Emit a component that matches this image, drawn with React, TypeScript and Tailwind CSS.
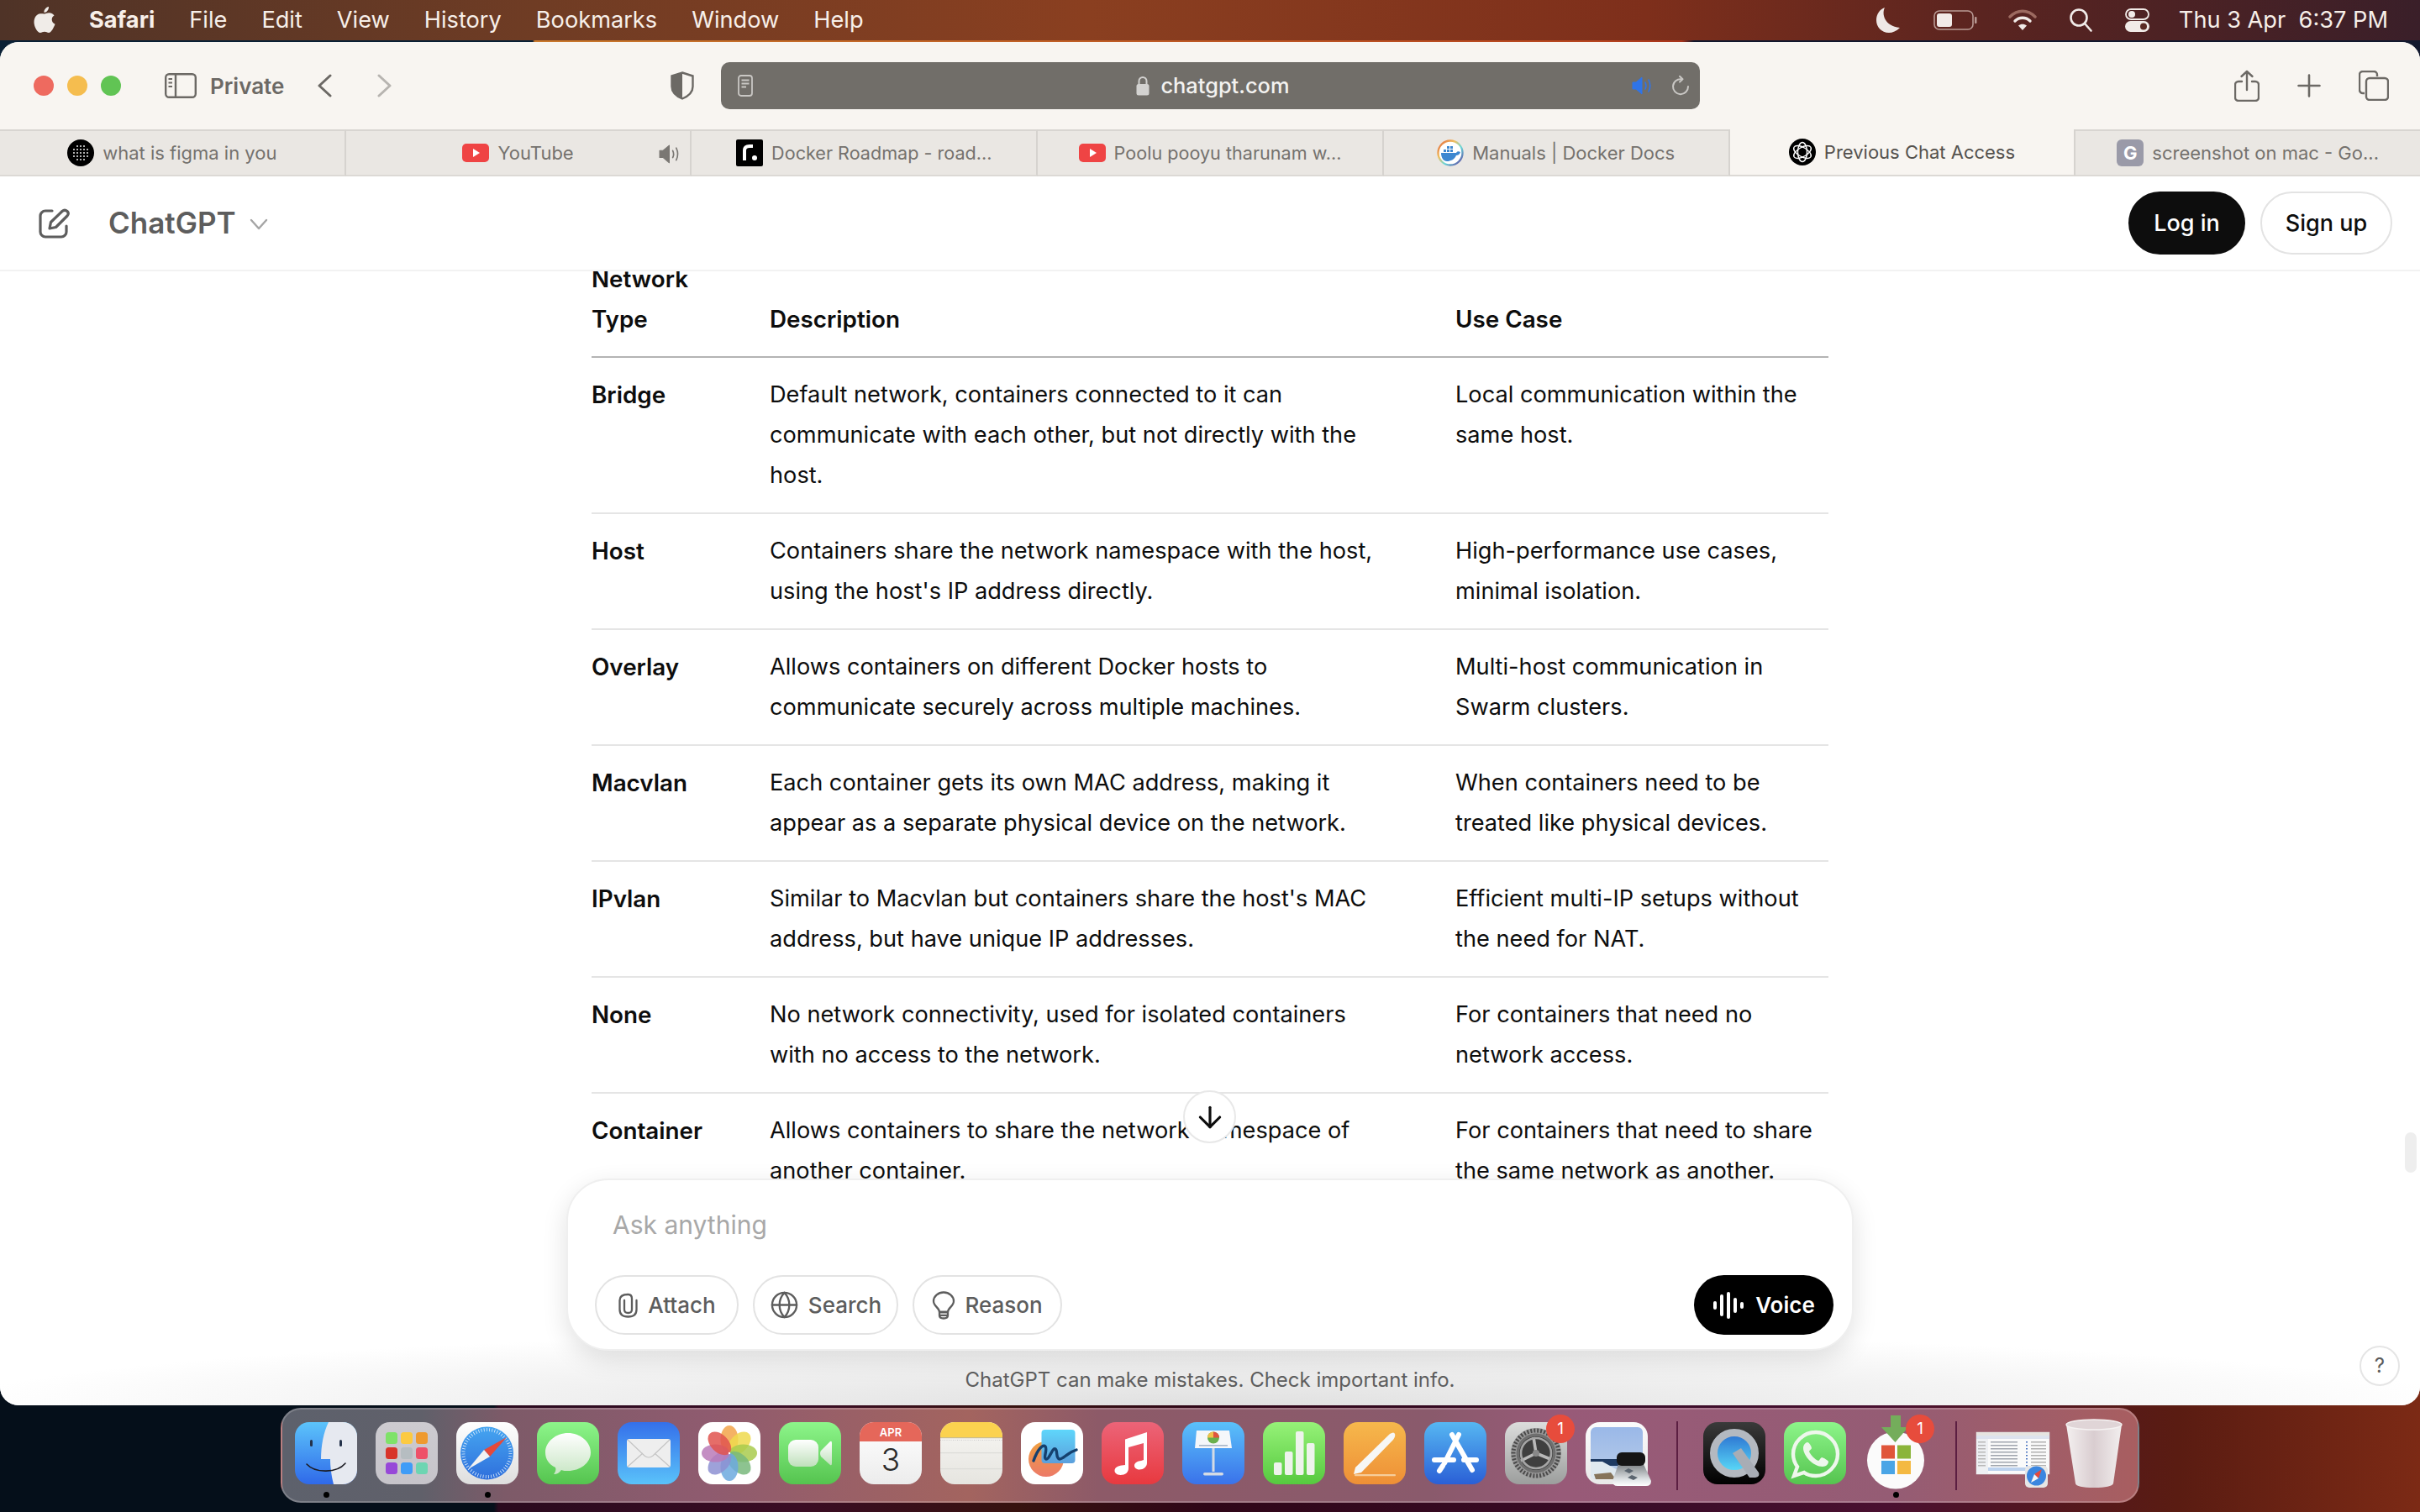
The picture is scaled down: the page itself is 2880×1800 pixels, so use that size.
import React from "react";
import { ArrowDown, Globe } from "lucide-react";

const Sq = ({ id, from, to, children }: { id: string; from: string; to: string; children?: React.ReactNode }) => (
  <svg viewBox="0 0 74 74" className="w-[74px] h-[74px] block overflow-visible">
    <defs>
      <linearGradient id={id} x1="0" y1="0" x2="0" y2="1">
        <stop offset="0" stopColor={from} />
        <stop offset="1" stopColor={to} />
      </linearGradient>
    </defs>
    <rect width="74" height="74" rx="17" fill={`url(#${id})`} />
    {children}
  </svg>
);

const Finder = () => (
  <Sq id="fi" from="#5cc4fb" to="#2f69e9">
    <path d="M40 0H57a17 17 0 0 1 17 17V57a17 17 0 0 1-17 17H46C43 62 42 52 42 44H31C31 28 34 12 40 0Z" fill="#e6e9f0" />
    <rect x="18" y="21" width="3" height="8" rx="1.5" fill="#24324a" />
    <rect x="53" y="21" width="3" height="8" rx="1.5" fill="#24324a" />
    <path d="M14 50C24 61 50 61 60 49" fill="none" stroke="#1c1c24" strokeWidth="1.6" strokeLinecap="round" />
  </Sq>
);

const Launchpad = () => {
  const c = ["#7fe269", "#fcca41", "#ef9a2f", "#d8342a", "#b6bdc1", "#ee5169", "#9748d8", "#3f9cf7", "#6dd5b2"];
  return (
    <Sq id="lp" from="#cdcbd0" to="#c6c4ca">
      {c.map((f, i) => (
        <rect key={i} x={12 + (i % 3) * 18} y={12 + Math.floor(i / 3) * 18} width="14" height="14" rx="3.5" fill={f} />
      ))}
    </Sq>
  );
};

const Safari = () => (
  <Sq id="sa" from="#ffffff" to="#dedede">
    <defs>
      <linearGradient id="sab" x1="0" y1="0" x2="0" y2="1">
        <stop offset="0" stopColor="#45a5f0" />
        <stop offset="1" stopColor="#2f6fdc" />
      </linearGradient>
    </defs>
    <circle cx="36.5" cy="37" r="31.5" fill="url(#sab)" />
    <circle cx="36.5" cy="37" r="28" fill="none" stroke="#dcecfb" strokeWidth="4" strokeDasharray="0.8 2.4" />
    <polygon points="60,18 33,33 40,41" fill="#e5493b" />
    <polygon points="14,56 33,33 40,41" fill="#f2f2f2" />
  </Sq>
);

const Messages = () => (
  <Sq id="ms" from="#8df58a" to="#55c44f">
    <defs>
      <linearGradient id="msb" x1="0" y1="0" x2="0" y2="1">
        <stop offset="0" stopColor="#ffffff" />
        <stop offset="1" stopColor="#c9e6c5" />
      </linearGradient>
    </defs>
    <path d="M37 13C51 13 64 23 64 36S51 58 37 58C34 58 31 58 29 57C27 60 24 62 20 62C22 59 23 57 22 54C14 50 10 44 10 36C10 23 23 13 37 13Z" fill="url(#msb)" />
  </Sq>
);

const Mail = () => (
  <Sq id="ml" from="#3570ea" to="#5ac2fa">
    <rect x="11" y="20" width="52" height="34" rx="3" fill="#eeeeee" />
    <path d="M12 21L32 40Q37 44 42 40L62 21M12 53L30 37M62 53L44 37" fill="none" stroke="#c4c4c4" strokeWidth="1.2" />
  </Sq>
);

const Photos = () => {
  const c = ["#f2a54a", "#eed94d", "#a9cb4e", "#79b97c", "#6ca9de", "#8d90d2", "#ba7ab9", "#e0544f"];
  return (
    <Sq id="ph" from="#ffffff" to="#ffffff">
      {c.map((f, i) => (
        <ellipse key={i} cx="37" cy="20.5" rx="10.5" ry="16.5" fill={f} fillOpacity="0.85" transform={`rotate(${i * 45} 37 37)`} />
      ))}
      <circle cx="37" cy="37" r="1.2" fill="#fff" />
    </Sq>
  );
};

const FaceTime = () => (
  <Sq id="ft" from="#8df58a" to="#55c44f">
    <defs>
      <linearGradient id="ftb" x1="0" y1="0" x2="0" y2="1">
        <stop offset="0" stopColor="#ffffff" />
        <stop offset="1" stopColor="#bfe0bb" />
      </linearGradient>
    </defs>
    <rect x="11" y="21" width="36" height="32" rx="9" fill="url(#ftb)" />
    <path d="M50 34L61 23Q63 22 63 25V49Q63 52 61 51L50 41Q48 37 50 34Z" fill="url(#ftb)" />
  </Sq>
);

const Calendar = () => (
  <div className="relative w-[74px] h-[74px] rounded-[17px] overflow-hidden bg-[linear-gradient(#ffffff,#ececec)] flex flex-col items-center">
    <div className="w-full h-[23px] bg-[#e5675a] text-white text-[13px] font-semibold leading-[24px] text-center [font-family:Inter,sans-serif]">APR</div>
    <div className="text-[#2a2a2a] text-[37px] leading-[44px] font-light [font-family:Inter,sans-serif]">3</div>
  </div>
);

const Notes = () => (
  <Sq id="nt" from="#f7f6f3" to="#e6e5e0">
    <path d="M0 18V17A17 17 0 0 1 17 0H57A17 17 0 0 1 74 17V18Z" fill="#fbd24f" />
    <rect y="18" width="74" height="1.2" fill="#c9bd8e" />
    <line x1="0" y1="21.5" x2="74" y2="21.5" stroke="#c5c5c5" strokeWidth="0.8" strokeDasharray="1 1.5" />
    <rect y="36" width="74" height="1.2" fill="#dcdcd8" />
    <rect y="55" width="74" height="1.2" fill="#dcdcd8" />
  </Sq>
);

const Freeform = () => (
  <Sq id="ff" from="#ffffff" to="#ffffff">
    <defs>
      <linearGradient id="ffb" x1="0" y1="0" x2="0" y2="1">
        <stop offset="0" stopColor="#5fd6fb" />
        <stop offset="1" stopColor="#5b9fdc" />
      </linearGradient>
      <linearGradient id="ffo" x1="0" y1="0" x2="0" y2="1">
        <stop offset="0" stopColor="#f0a040" />
        <stop offset="1" stopColor="#ec7a68" />
      </linearGradient>
    </defs>
    <circle cx="30" cy="44" r="21" fill="url(#ffo)" />
    <rect x="24.5" y="9" width="40" height="40" rx="4" fill="url(#ffb)" />
    <path d="M15 46C20 32 26 26 29 29C32 32 26 43 30 44C34 45 37 30 41 32C44 34 41 43 46 44C51 44 54 37 66 33" fill="none" stroke="#15406e" strokeWidth="3.4" strokeLinecap="round" />
  </Sq>
);

const Music = () => (
  <Sq id="mu" from="#ec6478" to="#e8393f">
    <path d="M27 20.5L53 12V48.5C53 53 49 56.5 44 56.5C40 56.5 38 54 38 52C38 48 42 46.5 46 46L49 45V25L31 30V55C31 60 27 63 21.5 63C17 63 14.5 60 14.5 58C14.5 54 18.5 52 23 51.5L27 51Z" fill="#fff" transform="translate(1 0)" />
  </Sq>
);

const Keynote = () => (
  <Sq id="kn" from="#5ac1fa" to="#3a72ea">
    <path d="M17 10H56L59 31H15Z" fill="#f5f7fa" />
    <rect x="20" y="27" width="34" height="1.6" fill="#a8b6c8" />
    <circle cx="37" cy="18.5" r="7" fill="#6ab04c" />
    <path d="M37 18.5V11.5A7 7 0 0 1 44 18.5Z" fill="#e0553f" />
    <path d="M37 18.5L30 18.5A7 7 0 0 1 37 11.5Z" fill="#f2c14a" />
    <rect x="35.5" y="31" width="3" height="28" fill="#d5dbe4" />
    <rect x="25" y="60" width="24" height="3.5" rx="1.7" fill="#d5dbe4" />
  </Sq>
);

const Numbers = () => (
  <Sq id="nu" from="#96f278" to="#56c93f">
    <rect x="13" y="48" width="9.5" height="15" rx="2" fill="#eef3ec" />
    <rect x="26" y="35" width="9.5" height="28" rx="2" fill="#eef3ec" />
    <rect x="39" y="11" width="9.5" height="52" rx="2" fill="#eef3ec" />
    <rect x="52" y="25" width="9.5" height="38" rx="2" fill="#eef3ec" />
  </Sq>
);

const Pages = () => (
  <Sq id="pg" from="#f6b84c" to="#ee8f36">
    <path d="M12 62L14 54L55 14Q60 11 61 14Q62 17 59 21L21 60Z" fill="#f7f7f5" />
    <rect x="13" y="62" width="49" height="2.2" rx="1" fill="#f6cd9a" />
  </Sq>
);

const AppStore = () => (
  <Sq id="as" from="#56b7f2" to="#2a5fd6">
    <path d="M41 15L24 49M33 15L57 57M12 45H35M47 45H62M22 52L18 58" fill="none" stroke="#fff" strokeWidth="6" strokeLinecap="round" />
  </Sq>
);

const SettingsIcon = () => (
  <Sq id="st" from="#dcdddc" to="#9c9e9d">
    <circle cx="37" cy="37" r="30" fill="#9a9a9a" />
    <circle cx="37" cy="37" r="27" fill="none" stroke="#4a4a4a" strokeWidth="5" strokeDasharray="2 2" />
    <circle cx="37" cy="37" r="23.5" fill="#6f6f6f" />
    <circle cx="37" cy="37" r="20" fill="#3f3f3f" />
    <path d="M37 37L34 18M37 37L54 44M37 37L19 46" stroke="#b9b9b9" strokeWidth="3.6" />
    <circle cx="37" cy="37" r="18" fill="none" stroke="#a5a5a5" strokeWidth="2.6" />
    <circle cx="37" cy="37" r="4" fill="#888" />
  </Sq>
);

const Preview = () => (
  <Sq id="pv" from="#fbfbfb" to="#e9e9e9">
    <defs>
      <linearGradient id="pvs" x1="0" y1="0" x2="0" y2="1">
        <stop offset="0" stopColor="#9ab8e8" />
        <stop offset="1" stopColor="#b9cde8" />
      </linearGradient>
      <linearGradient id="pvg" x1="0" y1="0" x2="0" y2="1">
        <stop offset="0" stopColor="#7c8184" />
        <stop offset="0.7" stopColor="#dfe3e5" />
        <stop offset="1" stopColor="#ffffff" />
      </linearGradient>
    </defs>
    <path d="M6 12A6 6 0 0 1 12 6H62A6 6 0 0 1 68 12V68H12A6 6 0 0 1 6 62Z" fill="url(#pvs)" />
    <path d="M6 44H68V52H6Z" fill="#1f3b62" />
    <path d="M6 47H20L40 58V68H12A6 6 0 0 1 6 62Z" fill="#dfe9ef" />
    <path d="M10 62L30 60L36 68H12Z" fill="#86745a" />
    <path d="M39 50H69L78 70Q78 76 72 76H38Q32 76 32 70Z" fill="url(#pvg)" />
    <rect x="37" y="36" width="34" height="16" rx="6" fill="#151515" />
    <path d="M46 58l5-3 6 3-5 3zM50 66l5-3 7 3-5 3z" fill="#5c6670" />
  </Sq>
);

const QuickTime = () => (
  <Sq id="qt" from="#3a3a3a" to="#000000">
    <defs>
      <linearGradient id="qtb" x1="0" y1="0" x2="0" y2="1">
        <stop offset="0" stopColor="#2a6fd0" />
        <stop offset="1" stopColor="#5de0fa" />
      </linearGradient>
    </defs>
    <circle cx="37" cy="37" r="24.5" fill="url(#qtb)" stroke="#b4b9c0" strokeWidth="9" />
    <path d="M35 37L45 31L66 60Q68 65 62 66L55 66Z" fill="#a8adb5" />
  </Sq>
);

const WhatsApp = () => (
  <Sq id="wa" from="#8df58a" to="#55c44f">
    <path d="M38 12C23 12 11 24 11 38C11 44 13 49 16 53L12 64L24 60C28 63 33 64 38 64C52 64 64 52 64 38C64 24 52 12 38 12Z" fill="none" stroke="#eef7ec" strokeWidth="4.4" />
    <path d="M28 24C26 24 23 27 23 31C23 40 35 53 46 53C50 53 53 50 53 47C53 46 47 42 45 42C44 42 42 46 41 46C37 45 31 38 30 35C30 34 33 32 33 31C33 29 30 24 28 24Z" fill="#eef7ec" />
  </Sq>
);

const Store = () => (
  <svg viewBox="0 0 74 74" className="w-[74px] h-[74px] block overflow-visible">
    <circle cx="37" cy="45.5" r="34" fill="#fbfbfb" />
    <rect x="20" y="27.5" width="16" height="16" fill="#e0563a" />
    <rect x="39" y="27.5" width="16" height="16" fill="#8bb53a" />
    <rect x="20" y="46" width="16" height="16" fill="#4aa5e6" />
    <rect x="39" y="46" width="16" height="16" fill="#f4b942" />
    <path d="M31 -8H43V6H52L36.5 24L20 6H31Z" fill="#74ad5b" />
  </svg>
);

const Thumb = () => (
  <svg viewBox="0 0 74 74" className="w-[74px] h-[74px] block overflow-visible">
    <rect x="-7" y="12" width="87" height="50" fill="#fafafa" stroke="#d5d5d5" strokeWidth="0.5" />
    <rect x="-7" y="12" width="87" height="4" fill="#e6e4e0" />
    <rect x="-7" y="16" width="87" height="4" fill="#dde3ee" />
    <rect x="-7" y="20" width="14" height="42" fill="#eef0f3" />
    {[23, 27, 31, 35, 39, 43, 47, 51].map((y) => (
      <g key={y}>
        <rect x="10" y={y} width="32" height="1.5" fill="#a0a5ae" />
        <rect x="52" y={y} width="2" height="1.5" fill="#4a74c0" />
        <rect x="58" y={y} width="18" height="1.5" fill="#b0b0b0" />
        <rect x="-5" y={y} width="9" height="1.5" fill="#b8b8b8" />
      </g>
    ))}
    <rect x="7" y="54" width="60" height="4" fill="#bcd2ee" />
    <rect x="51" y="52" width="27" height="26" rx="5" fill="#e6e6e6" />
    <circle cx="64.5" cy="64" r="11.5" fill="#3a86e0" />
    <polygon points="71,56 62,62 67,67" fill="#e5493b" />
    <polygon points="58,72 62,62 67,67" fill="#f4f4f4" />
  </svg>
);

const Trash = () => (
  <svg viewBox="0 0 74 74" className="w-[74px] h-[74px] block overflow-visible">
    <defs>
      <linearGradient id="trb" x1="0" y1="0" x2="1" y2="0">
        <stop offset="0" stopColor="#f4f0f0" />
        <stop offset="0.5" stopColor="#d9cdd0" />
        <stop offset="1" stopColor="#f2eeee" />
      </linearGradient>
    </defs>
    <path d="M4 3L15 73Q16 78 37 78Q58 78 60 73L70 3Z" fill="url(#trb)" />
    <ellipse cx="37" cy="3" rx="33" ry="6" fill="#e0d5d7" stroke="#f6f3f3" strokeWidth="1.5" />
  </svg>
);

const Badge = () => (
  <div className="absolute right-[-9px] top-[-9px] w-[34px] h-[34px] rounded-full bg-[#e74c3c] text-white text-[19px] leading-[34px] text-center [font-family:Inter,sans-serif]">1</div>
);

const Dot = () => <div className="absolute left-[34px] top-[83px] w-[7px] h-[7px] rounded-full bg-black" />;

const DockItem = ({ children, dot, badge }: { children: React.ReactNode; dot?: boolean; badge?: boolean }) => (
  <div className="relative w-[74px] h-[74px] shrink-0">
    {children}
    {badge && <Badge />}
    {dot && <Dot />}
  </div>
);

const Div = () => <div className="w-[2px] h-[82px] -mt-[1px] ml-[12px] mr-[8px] bg-[#5c1f42] shrink-0" />;

/* ---------- browser glyphs ---------- */
const Sidebar = () => (
  <svg width="38" height="30" viewBox="0 0 38 30" fill="none" stroke="#6c6965" strokeWidth="2.4">
    <rect x="1.2" y="1.2" width="35.6" height="27.6" rx="4" />
    <line x1="13" y1="1.2" x2="13" y2="28.8" />
    <path d="M4.5 7H9M4.5 11.5H9M4.5 16H9" strokeWidth="2" />
  </svg>
);
const Chevron = ({ dir, color }: { dir: "l" | "r"; color: string }) => (
  <svg width="18" height="28" viewBox="0 0 18 28" fill="none" stroke={color} strokeWidth="3" strokeLinecap="round" strokeLinejoin="round">
    <path d={dir === "l" ? "M16 2L3 14L16 26" : "M2 2L15 14L2 26"} />
  </svg>
);
const Shield = () => (
  <svg width="28" height="34" viewBox="0 0 28 34" className="block">
    <path d="M14 1.5L26.5 5.5V18C26.5 25 20 30 14 32.5C8 30 1.5 25 1.5 18V5.5Z" fill="none" stroke="#6c6965" strokeWidth="2.4" />
    <path d="M14 1.5L1.5 5.5V18C1.5 25 8 30 14 32.5Z" fill="#6c6965" />
  </svg>
);
const PageIcon = () => (
  <svg width="18" height="26" viewBox="0 0 18 26" fill="none" stroke="#c9c7c4" strokeWidth="1.8">
    <rect x="1" y="1" width="16" height="24" rx="3" />
    <path d="M4.5 6.5H13.5M4.5 10.5H13.5M4.5 14.5H10" />
  </svg>
);
const Lock = () => (
  <svg width="16" height="24" viewBox="0 0 16 24" className="block">
    <path d="M3.5 11V6.5a4.5 4.5 0 0 1 9 0V11" fill="none" stroke="#d3d2d0" strokeWidth="2" />
    <rect x="0.5" y="10" width="15" height="13.5" rx="2.5" fill="#d3d2d0" />
  </svg>
);
const Speaker = ({ color, w = 26 }: { color: string; w?: number }) => (
  <svg width={w} height={(w * 22) / 26} viewBox="0 0 26 22" fill="none" className="block">
    <path d="M1 7H5L12 1V21L5 15H1Z" fill={color} stroke={color} strokeWidth="1" strokeLinejoin="round" />
    <path d="M16 7Q18 11 16 15M20 4Q23.5 11 20 18" stroke={color} strokeWidth="1.6" strokeLinecap="round" />
  </svg>
);
const Reload = () => (
  <svg width="22" height="24" viewBox="0 0 22 24" fill="none" stroke="#c9c7c4" strokeWidth="2" strokeLinecap="round" strokeLinejoin="round">
    <path d="M12 4.2A9 9 0 1 0 20 13" />
    <path d="M10 0.8L13.5 4.2L10 7.6" />
  </svg>
);
const ShareIcon = () => (
  <svg width="30" height="38" viewBox="0 0 30 38" fill="none" stroke="#6c6965" strokeWidth="2.4" strokeLinecap="round" strokeLinejoin="round">
    <path d="M9 14H5a4 4 0 0 0-4 4V33a4 4 0 0 0 4 4H25a4 4 0 0 0 4-4V18a4 4 0 0 0-4-4H21" />
    <path d="M15 24V2M8.5 8L15 2L21.5 8" />
  </svg>
);
const PlusIcon = () => (
  <svg width="28" height="28" viewBox="0 0 28 28" stroke="#6c6965" strokeWidth="2.6" strokeLinecap="round">
    <path d="M14 1.5V26.5M1.5 14H26.5" />
  </svg>
);
const TabsIcon = () => (
  <svg width="36" height="36" viewBox="0 0 36 36" fill="none" stroke="#6c6965" strokeWidth="2.4">
    <path d="M7 27H5a4 4 0 0 1-4-4V5a4 4 0 0 1 4-4H18a4 4 0 0 1 4 4V7" />
    <rect x="9" y="9" width="26" height="26" rx="4" />
  </svg>
);

/* ---------- favicons ---------- */
const FigmaFav = () => (
  <svg width="32" height="32" viewBox="0 0 32 32">
    <circle cx="16" cy="16" r="16" fill="#000" />
    {[-8, -4, 0, 4, 8].flatMap((x) =>
      [-8, -4, 0, 4, 8].map((y) =>
        x * x + y * y < 90 ? <circle key={`${x}${y}`} cx={16 + x} cy={16 + y} r="1.1" fill="#ddd" /> : null
      )
    )}
  </svg>
);
const YtFav = () => (
  <svg width="32" height="24" viewBox="0 0 32 24">
    <rect width="32" height="22" y="1" rx="5" fill="#ef4444" />
    <polygon points="13,7 21,12 13,17" fill="#fff" />
  </svg>
);
const RoadmapFav = () => (
  <svg width="32" height="32" viewBox="0 0 32 32">
    <rect width="32" height="32" rx="2" fill="#000" />
    <path d="M10 25V13Q10 8 16 8H20" fill="none" stroke="#fff" strokeWidth="4" />
    <circle cx="22" cy="22" r="3" fill="#fff" />
  </svg>
);
const DockerFav = () => (
  <svg width="32" height="32" viewBox="0 0 32 32">
    <defs>
      <linearGradient id="dkr" x1="0" y1="0" x2="1" y2="1">
        <stop offset="0" stopColor="#e2603a" />
        <stop offset="0.35" stopColor="#f0c060" />
        <stop offset="0.6" stopColor="#6cd8d8" />
        <stop offset="1" stopColor="#5a3aa0" />
      </linearGradient>
    </defs>
    <circle cx="16" cy="16" r="14.5" fill="#fff" stroke="url(#dkr)" strokeWidth="2.4" />
    <path d="M5 16H23C24 14 26 14 28 15C27 18 25 19 23 19C21 24 16 26 12 26C8 26 5 22 5 16Z" fill="#3d87d0" />
    <path d="M8 12h3v3H8zM12 12h3v3h-3zM16 12h3v3h-3zM12 8h3v3h-3zM16 8h3v3h-3z" fill="#3d87d0" />
  </svg>
);
const GptFav = () => (
  <svg width="32" height="32" viewBox="0 0 32 32">
    <circle cx="16" cy="16" r="16" fill="#000" />
    {[0, 60, 120].map((a) => (
      <ellipse key={a} cx="16" cy="16" rx="11.5" ry="5.5" fill="none" stroke="#fff" strokeWidth="1.4" transform={`rotate(${a + 30} 16 16)`} />
    ))}
  </svg>
);
const GoogleFav = () => (
  <div className="w-[32px] h-[32px] rounded-[6px] bg-[#9a9aa8] text-white text-[22px] font-bold leading-[32px] text-center">G</div>
);

const Tab = ({ icon, label, active, extra, last, cls = "text-[22px]" }: { icon: React.ReactNode; label: string; active?: boolean; extra?: React.ReactNode; last?: boolean; cls?: string }) => (
  <div
    className={`relative flex-1 flex items-center justify-center gap-[10px] h-full ${active ? "bg-[#f8f5f1] border-t-0" : "bg-[#eae7e3] border-t-2 border-t-[#d8d5d1]"} ${last ? "" : "border-r-2 border-r-[#d6d3cf]"} border-b-2 border-b-[#dcd9d5] ${cls} ${active ? "text-[#55524e]" : "text-[#75726e]"}`}
  >
    {icon}
    <span>{label}</span>
    {extra && <div className="absolute right-[10px] top-[16px]">{extra}</div>}
  </div>
);

/* ---------- chatgpt ---------- */
const Compose = () => (
  <svg width="38" height="36" viewBox="0 0 38 36" fill="none" stroke="#5d5d5d" strokeWidth="3.2" strokeLinecap="round" strokeLinejoin="round">
    <path d="M16 3H8A6 6 0 0 0 2 9V28A6 6 0 0 0 8 34H27A6 6 0 0 0 33 28V21" />
    <path d="M13 24L14.5 16.5L28 3.5Q31 1 34 3.5Q36.5 6 34 9L20.5 22.5Z" />
  </svg>
);
const Clip = () => (
  <svg width="25" height="30" viewBox="0 0 25 30" fill="none" stroke="#5d5d5d" strokeWidth="2.3" strokeLinecap="round">
    <path d="M8 9V20Q8 24 12.5 24Q17 24 17 20V7Q17 2 12.5 2Q2.5 2 2.5 9V20Q2.5 28.5 12.5 28.5Q22.5 28.5 22.5 20V9" />
  </svg>
);
const Bulb = () => (
  <svg width="28" height="34" viewBox="0 0 28 34" fill="none" stroke="#5d5d5d" strokeWidth="2.3" strokeLinecap="round" strokeLinejoin="round">
    <path d="M9 25C9 20 2 18 2 12A12 10.5 0 0 1 26 12C26 18 19 20 19 25Z" />
    <path d="M9 25H19V29Q19 32.5 14 32.5Q9 32.5 9 29ZM9 28.8H19" />
  </svg>
);
const VoiceBars = () => (
  <svg width="38" height="32" viewBox="0 0 38 32" fill="#fff">
    <rect x="1" y="11" width="4" height="10" rx="2" />
    <rect x="9" y="3" width="4" height="26" rx="2" />
    <rect x="17" y="0" width="4" height="32" rx="2" />
    <rect x="25" y="7" width="4" height="18" rx="2" />
    <rect x="33" y="12" width="4" height="8" rx="2" />
  </svg>
);

const Pill = ({ icon, label, cls }: { icon: React.ReactNode; label: string; cls: string }) => (
  <div className={`h-[71px] rounded-full border-2 border-[#e3e3e3] flex items-center justify-center gap-[11px] text-[26px] font-medium text-[#5d5d5d] ${cls}`}>
    {icon}
    <span>{label}</span>
  </div>
);

const rows: [string, string[], string[]][] = [
  ["Bridge", ["Default network, containers connected to it can", "communicate with each other, but not directly with the", "host."], ["Local communication within the", "same host."]],
  ["Host", ["Containers share the network namespace with the host,", "using the host's IP address directly."], ["High-performance use cases,", "minimal isolation."]],
  ["Overlay", ["Allows containers on different Docker hosts to", "communicate securely across multiple machines."], ["Multi-host communication in", "Swarm clusters."]],
  ["Macvlan", ["Each container gets its own MAC address, making it", "appear as a separate physical device on the network."], ["When containers need to be", "treated like physical devices."]],
  ["IPvlan", ["Similar to Macvlan but containers share the host's MAC", "address, but have unique IP addresses."], ["Efficient multi-IP setups without", "the need for NAT."]],
  ["None", ["No network connectivity, used for isolated containers", "with no access to the network."], ["For containers that need no", "network access."]],
  ["Container", ["Allows containers to share the network namespace of", "another container."], ["For containers that need to share", "the same network as another."]],
];

const Lines = ({ l }: { l: string[] }) => (
  <>
    {l.map((t) => (
      <div key={t} className="whitespace-nowrap">{t}</div>
    ))}
  </>
);

export default function App() {
  return (
    <div className="relative w-[2880px] h-[1800px] overflow-hidden flex flex-col [font-family:Inter,'Liberation_Sans',sans-serif] [background:linear-gradient(90deg,#0a2035_0%,#0a2035_22%,#c9782c_22.1%,#b8451f_66%,#a8321a_69.5%,#12182e_70%,#12182e_100%)_top/100%_80px_no-repeat,linear-gradient(90deg,#050f1a_0%,#050f1a_20.4%,#2a0a1e_20.6%,#3a0c24_33%,#37120f_42%,#2f0618_50%,#3a0c28_68%,#4a1030_78%,#5a1c12_90%,#7c2a15_100%)]">
      {/* menu bar */}
      <div className="h-[48px] shrink-0 flex items-center pl-[40px] pr-[38px] text-[27.2px] text-[#f7efe9] bg-[linear-gradient(90deg,#4f3327_0%,#6f3c24_22%,#8a3f20_45%,#7e2f1b_68%,#5a2420_82%,#3a1f29_100%)]">
        <svg width="26" height="32" viewBox="0 0 26 32" fill="#f0ece8" className="mr-[40px]">
          <path d="M18 0C18.3 3.5 15.5 7 12.5 7C12 3.5 15 0.5 18 0ZM12.8 8.5C14.5 8.5 16 7.3 18.5 7.3C20.5 7.3 23 8.3 24.5 10.6C20.3 13 21 19 25.5 20.8C24 25 21 31 18 31C16 31 15.3 29.8 13 29.8C10.7 29.8 9.8 31 8 31C4.5 31 0.5 24 0.5 18.5C0.5 12.5 4.3 8.3 8 8.3C10 8.3 11.5 8.5 12.8 8.5Z" />
        </svg>
        <span className="font-bold mr-[41px]">Safari</span>
        <span className="mr-[41px]">File</span>
        <span className="mr-[41px]">Edit</span>
        <span className="mr-[41px]">View</span>
        <span className="mr-[41px]">History</span>
        <span className="mr-[41px]">Bookmarks</span>
        <span className="mr-[41px]">Window</span>
        <span>Help</span>
        <div className="flex-1" />
        <svg width="29" height="30" viewBox="0 0 29 30" fill="#efe8e6" className="mr-[39px]">
          <path d="M10 0C6 8 10 22 28 24C24 28 19 30 15 30C6 30 0 23 0 15C0 8 4 2 10 0Z" />
        </svg>
        <svg width="52" height="24" viewBox="0 0 52 24" fill="none" className="mr-[37px]">
          <rect x="1" y="1" width="46" height="22" rx="6" stroke="#b89a94" strokeWidth="1.6" />
          <rect x="4" y="4" width="18" height="16" rx="3" fill="#f1ebe8" />
          <rect x="49" y="8" width="2.5" height="8" rx="1" fill="#b89a94" />
        </svg>
        <svg width="34" height="26" viewBox="0 0 34 26" fill="none" className="mr-[39px]" strokeLinecap="round">
          <path d="M2 9C11 0 23 0 32 9" stroke="#9c6a60" strokeWidth="3.4" />
          <path d="M8 14C13 9 21 9 26 14" stroke="#f1ebe8" strokeWidth="3.4" />
          <path d="M17 25L12 19.5C15 17 19 17 22 19.5Z" fill="#f1ebe8" />
        </svg>
        <svg width="27" height="28" viewBox="0 0 27 28" fill="none" stroke="#f1ebe8" strokeWidth="2.6" className="mr-[39px]" strokeLinecap="round">
          <circle cx="11" cy="11" r="9.5" />
          <path d="M18 18L25.5 26.5" />
        </svg>
        <svg width="29" height="28" viewBox="0 0 29 28" className="mr-[35px]">
          <rect x="1" y="1" width="27" height="12" rx="6" fill="none" stroke="#f1ebe8" strokeWidth="1.8" />
          <circle cx="8" cy="7" r="4" fill="#f1ebe8" />
          <rect y="15" width="29" height="13" rx="6.5" fill="#f1ebe8" />
          <circle cx="22" cy="21.5" r="4" fill="#5a2a24" />
        </svg>
        <span className="whitespace-pre">Thu 3 Apr  6:37 PM</span>
      </div>
      <div className="h-[2px] shrink-0" />

      {/* window */}
      <div className="relative flex-1 min-h-0 flex flex-col rounded-[22px] overflow-hidden bg-white">
        {/* toolbar */}
        <div className="h-[104px] shrink-0 bg-[#f8f5f1] flex items-center pl-[40px] pr-[37px]">
          <div className="w-[24px] h-[24px] rounded-full bg-[#ee6a5f]" />
          <div className="w-[24px] h-[24px] rounded-full bg-[#f5bd4f] ml-[16px]" />
          <div className="w-[24px] h-[24px] rounded-full bg-[#61c454] ml-[16px]" />
          <div className="ml-[52px]"><Sidebar /></div>
          <span className="ml-[16px] text-[26px] font-semibold text-[#6c6965]">Private</span>
          <div className="ml-[39px]"><Chevron dir="l" color="#6c6965" /></div>
          <div className="ml-[54px]"><Chevron dir="r" color="#b7b4b0" /></div>
          <div className="ml-[331px]"><Shield /></div>
          <div className="ml-[32px] w-[1165px] h-[56px] rounded-[10px] bg-[#716e69] flex items-center pl-[20px] pr-[12px]">
            <PageIcon />
            <div className="flex-1 flex items-center justify-center gap-[13px] pl-[48px] text-[25.4px] font-medium text-[#f3f2f0]">
              <Lock />
              <span>chatgpt.com</span>
            </div>
            <Speaker color="#2f74e8" />
            <div className="ml-[21px]"><Reload /></div>
          </div>
          <div className="flex-1" />
          <ShareIcon />
          <div className="ml-[45px]"><PlusIcon /></div>
          <div className="ml-[45px]"><TabsIcon /></div>
        </div>

        {/* tabs */}
        <div className="h-[56px] shrink-0 flex">
          <Tab icon={<FigmaFav />} label="what is figma in you" />
          <Tab icon={<YtFav />} label="YouTube" extra={<Speaker color="#7a7773" w={27} />} />
          <Tab icon={<RoadmapFav />} label="Docker Roadmap - road..." cls="text-[21.6px]" />
          <Tab icon={<YtFav />} label="Poolu pooyu tharunam w..." cls="text-[21.6px]" />
          <Tab icon={<DockerFav />} label="Manuals | Docker Docs" />
          <Tab icon={<GptFav />} label="Previous Chat Access" active />
          <Tab icon={<GoogleFav />} label="screenshot on mac - Go..." last />
        </div>

        {/* chatgpt header */}
        <div className="h-[113px] shrink-0 flex items-center pl-[46px] pr-[33px] border-b-2 border-[#f2f2f2] bg-white">
          <Compose />
          <span className="ml-[45px] text-[35px] font-semibold text-[#5d5d5d]">ChatGPT</span>
          <svg width="22" height="14" viewBox="0 0 22 14" fill="none" stroke="#a5a5a5" strokeWidth="2.4" strokeLinecap="round" strokeLinejoin="round" className="ml-[16px] mt-[2px]">
            <path d="M2 2L11 12L20 2" />
          </svg>
          <div className="flex-1" />
          <div className="w-[139px] h-[75px] pt-[2px] rounded-full bg-[#0d0d0d] text-white text-[27px] font-medium flex items-center justify-center">Log in</div>
          <div className="ml-[18px] w-[157px] h-[75px] pt-[2px] rounded-full border-2 border-[#e3e3e3] text-[#0d0d0d] text-[27px] font-medium flex items-center justify-center">Sign up</div>
        </div>

        {/* conversation */}
        <div className="relative flex-1 min-h-0 overflow-hidden bg-white">
          <table className="-mt-[15px] ml-[704px] w-[1472px] table-fixed border-collapse text-[27.2px] leading-[48px] text-[#0d0d0d]">
            <thead>
              <tr className="border-b-2 border-[#b4b4b4] text-[27.8px] leading-[48px]">
                <th className="w-[212px] pb-[20px] text-left font-semibold align-bottom">Network<br />Type</th>
                <th className="w-[816px] pb-[20px] text-left font-semibold align-bottom">Description</th>
                <th className="pb-[20px] text-left font-semibold align-bottom">Use Case</th>
              </tr>
            </thead>
            <tbody>
              {rows.map(([a, b, c]) => (
                <tr key={a} className="border-b-2 border-[#e5e5e5]">
                  <td className="py-[20px] align-top font-semibold text-[27.8px]">{a}</td>
                  <td className="py-[20px] align-top"><Lines l={b} /></td>
                  <td className="py-[20px] align-top"><Lines l={c} /></td>
                </tr>
              ))}
            </tbody>
          </table>
          <div className="absolute left-[1408px] top-[975px] w-[63px] h-[63px] rounded-full bg-white border-2 border-[#e8e8e8] flex items-center justify-center text-[#0d0d0d]">
            <ArrowDown size={40} strokeWidth={1.9} />
          </div>
        </div>

        {/* composer */}
        <div className="relative h-[270px] shrink-0 bg-[radial-gradient(ellipse_1500px_90px_at_50%_100%,#e0e0e0,#ffffff)]">
          <div className="ml-[674px] w-[1532px] h-[205px] rounded-[50px] bg-white border-2 border-[#efefef] shadow-[0_10px_30px_rgba(0,0,0,0.12)] flex flex-col pl-[32px] pr-[22px]">
            <div className="h-[113px] pl-[21px] pb-[6px] flex items-center text-[30px] text-[#a8a8a8]">Ask anything</div>
            <div className="flex items-center gap-[17px]">
              <Pill cls="w-[171px]" icon={<Clip />} label="Attach" />
              <Pill cls="w-[173px]" icon={<Globe size={35} strokeWidth={1.6} />} label="Search" />
              <Pill cls="w-[178px]" icon={<Bulb />} label="Reason" />
              <div className="flex-1" />
              <div className="w-[166px] h-[71px] rounded-full bg-black text-white text-[26px] font-semibold flex items-center justify-center gap-[13px]">
                <VoiceBars />
                <span>Voice</span>
              </div>
            </div>
          </div>
          <div className="h-[65px] pt-[5px] flex items-center justify-center text-[24px] text-[#5d5d5d]">ChatGPT can make mistakes. Check important info.</div>
        </div>

        {/* scroll thumb + help */}
        <div className="absolute right-[4px] top-[1298px] w-[14px] h-[48px] rounded-full bg-[#eeeeee]" />
        <div className="absolute right-[24px] bottom-[23px] w-[48px] h-[48px] rounded-full border-2 border-[#e5e5e5] bg-white flex items-center justify-center text-[#5d5d5d] text-[24px]">?</div>
      </div>

      {/* dock */}
      <div className="h-[127px] shrink-0 pt-[3px] flex justify-center">
        <div className="h-[113px] flex items-start gap-[22px] pt-[15px] pl-[15px] pr-[15px] rounded-[24px] border-2 border-[#ffffff33] bg-[linear-gradient(90deg,#5d616c_0%,#60606a_7.5%,#7d5a68_12%,#8f5b6f_23%,#a3645f_37%,#8d5a68_44%,#8a5a6c_62%,#985a78_69%,#955c74_87%,#a85e60_100%)]">
          <DockItem dot><Finder /></DockItem>
          <DockItem><Launchpad /></DockItem>
          <DockItem dot><Safari /></DockItem>
          <DockItem><Messages /></DockItem>
          <DockItem><Mail /></DockItem>
          <DockItem><Photos /></DockItem>
          <DockItem><FaceTime /></DockItem>
          <DockItem><Calendar /></DockItem>
          <DockItem><Notes /></DockItem>
          <DockItem><Freeform /></DockItem>
          <DockItem><Music /></DockItem>
          <DockItem><Keynote /></DockItem>
          <DockItem><Numbers /></DockItem>
          <DockItem><Pages /></DockItem>
          <DockItem><AppStore /></DockItem>
          <DockItem badge><SettingsIcon /></DockItem>
          <DockItem><Preview /></DockItem>
          <Div />
          <DockItem><QuickTime /></DockItem>
          <DockItem><WhatsApp /></DockItem>
          <DockItem dot badge><Store /></DockItem>
          <Div />
          <DockItem><Thumb /></DockItem>
          <DockItem><Trash /></DockItem>
        </div>
      </div>
    </div>
  );
}
